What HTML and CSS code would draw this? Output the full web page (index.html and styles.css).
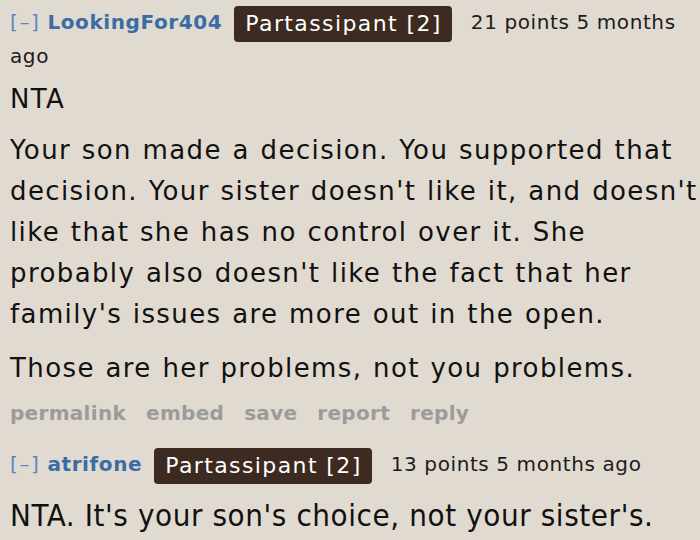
FILE: index.html
```html
<!DOCTYPE html>
<html>
<head>
<meta charset="utf-8">
<link rel="stylesheet" href="styles.css">
</head>
<body>
<div class="comment first">
  <div class="tagline"><span class="toggle">[–]</span> <span class="author">LookingFor404</span><span class="flair">Partassipant [2]</span><span class="meta">21 points 5 months</span> <span class="meta">ago</span></div>
  <div class="md">
    <p class="p-nta">NTA</p>
    <p class="p-body">Your son made a decision. You supported that decision. Your sister doesn't like it, and doesn't like that she has no control over it. She probably also doesn't like the fact that her family's issues are more out in the open.</p>
    <p class="p-last">Those are her problems, not you problems.</p>
  </div>
  <ul class="buttons">
    <li>permalink</li>
    <li>embed</li>
    <li>save</li>
    <li>report</li>
    <li>reply</li>
  </ul>
</div>
<div class="comment second">
  <div class="tagline"><span class="toggle">[–]</span> <span class="author">atrifone</span><span class="flair">Partassipant [2]</span><span class="meta">13 points 5 months ago</span></div>
  <div class="md">
    <p class="condensed">NTA. It's your son's choice, not your sister's.</p>
  </div>
</div>
</body>
</html>
```
FILE: styles.css
```css
html, body {
  margin: 0;
  padding: 0;
  background: #e1dad0;
}
body {
  font-family: "DejaVu Sans", Verdana, sans-serif;
  color: #111;
  padding: 6px 0 0 10px;
  width: 700px;
  height: 540px;
  overflow: hidden;
  box-sizing: border-box;
}
.tagline {
  font-size: 20px;
  line-height: 28px;
  letter-spacing: 0.6px;
  color: #222;
  padding-right: 10px;
}
.toggle {
  color: #5a86bf;
  letter-spacing: 1.6px;
}
.author {
  color: #3a6ca5;
  font-weight: bold;
}
.flair {
  display: inline-block;
  background: #3d2a20;
  color: #fff;
  font-size: 22px;
  line-height: 36px;
  letter-spacing: 1.4px;
  padding: 0 10px 0 11px;
  border-radius: 4px;
  margin: 0 19px 0 12px;
  vertical-align: -2px;
}
.meta {
  color: #1c1c1c;
}
.md p {
  margin: 0;
  font-size: 26px;
  line-height: 41px;
  letter-spacing: 1.4px;
  word-spacing: 1px;
}
.md .p-nta {
  margin-top: 9px;
}
.md .p-body {
  margin-top: 10px;
}
.md .p-last {
  margin-top: 13px;
}
.buttons {
  list-style: none;
  margin: 9px 0 0 0;
  padding: 0;
  display: flex;
  gap: 20px;
  font-size: 20px;
  font-weight: bold;
  letter-spacing: 0.3px;
  color: #9b9b9b;
  line-height: 30px;
}
.second {
  margin-top: 20px;
}
.md .condensed {
  margin-top: 11px;
  font-family: "DejaVu Sans Condensed", "DejaVu Sans", sans-serif;
  font-stretch: condensed;
  font-size: 31px;
  letter-spacing: 0.6px;
  word-spacing: 0;
}
```
